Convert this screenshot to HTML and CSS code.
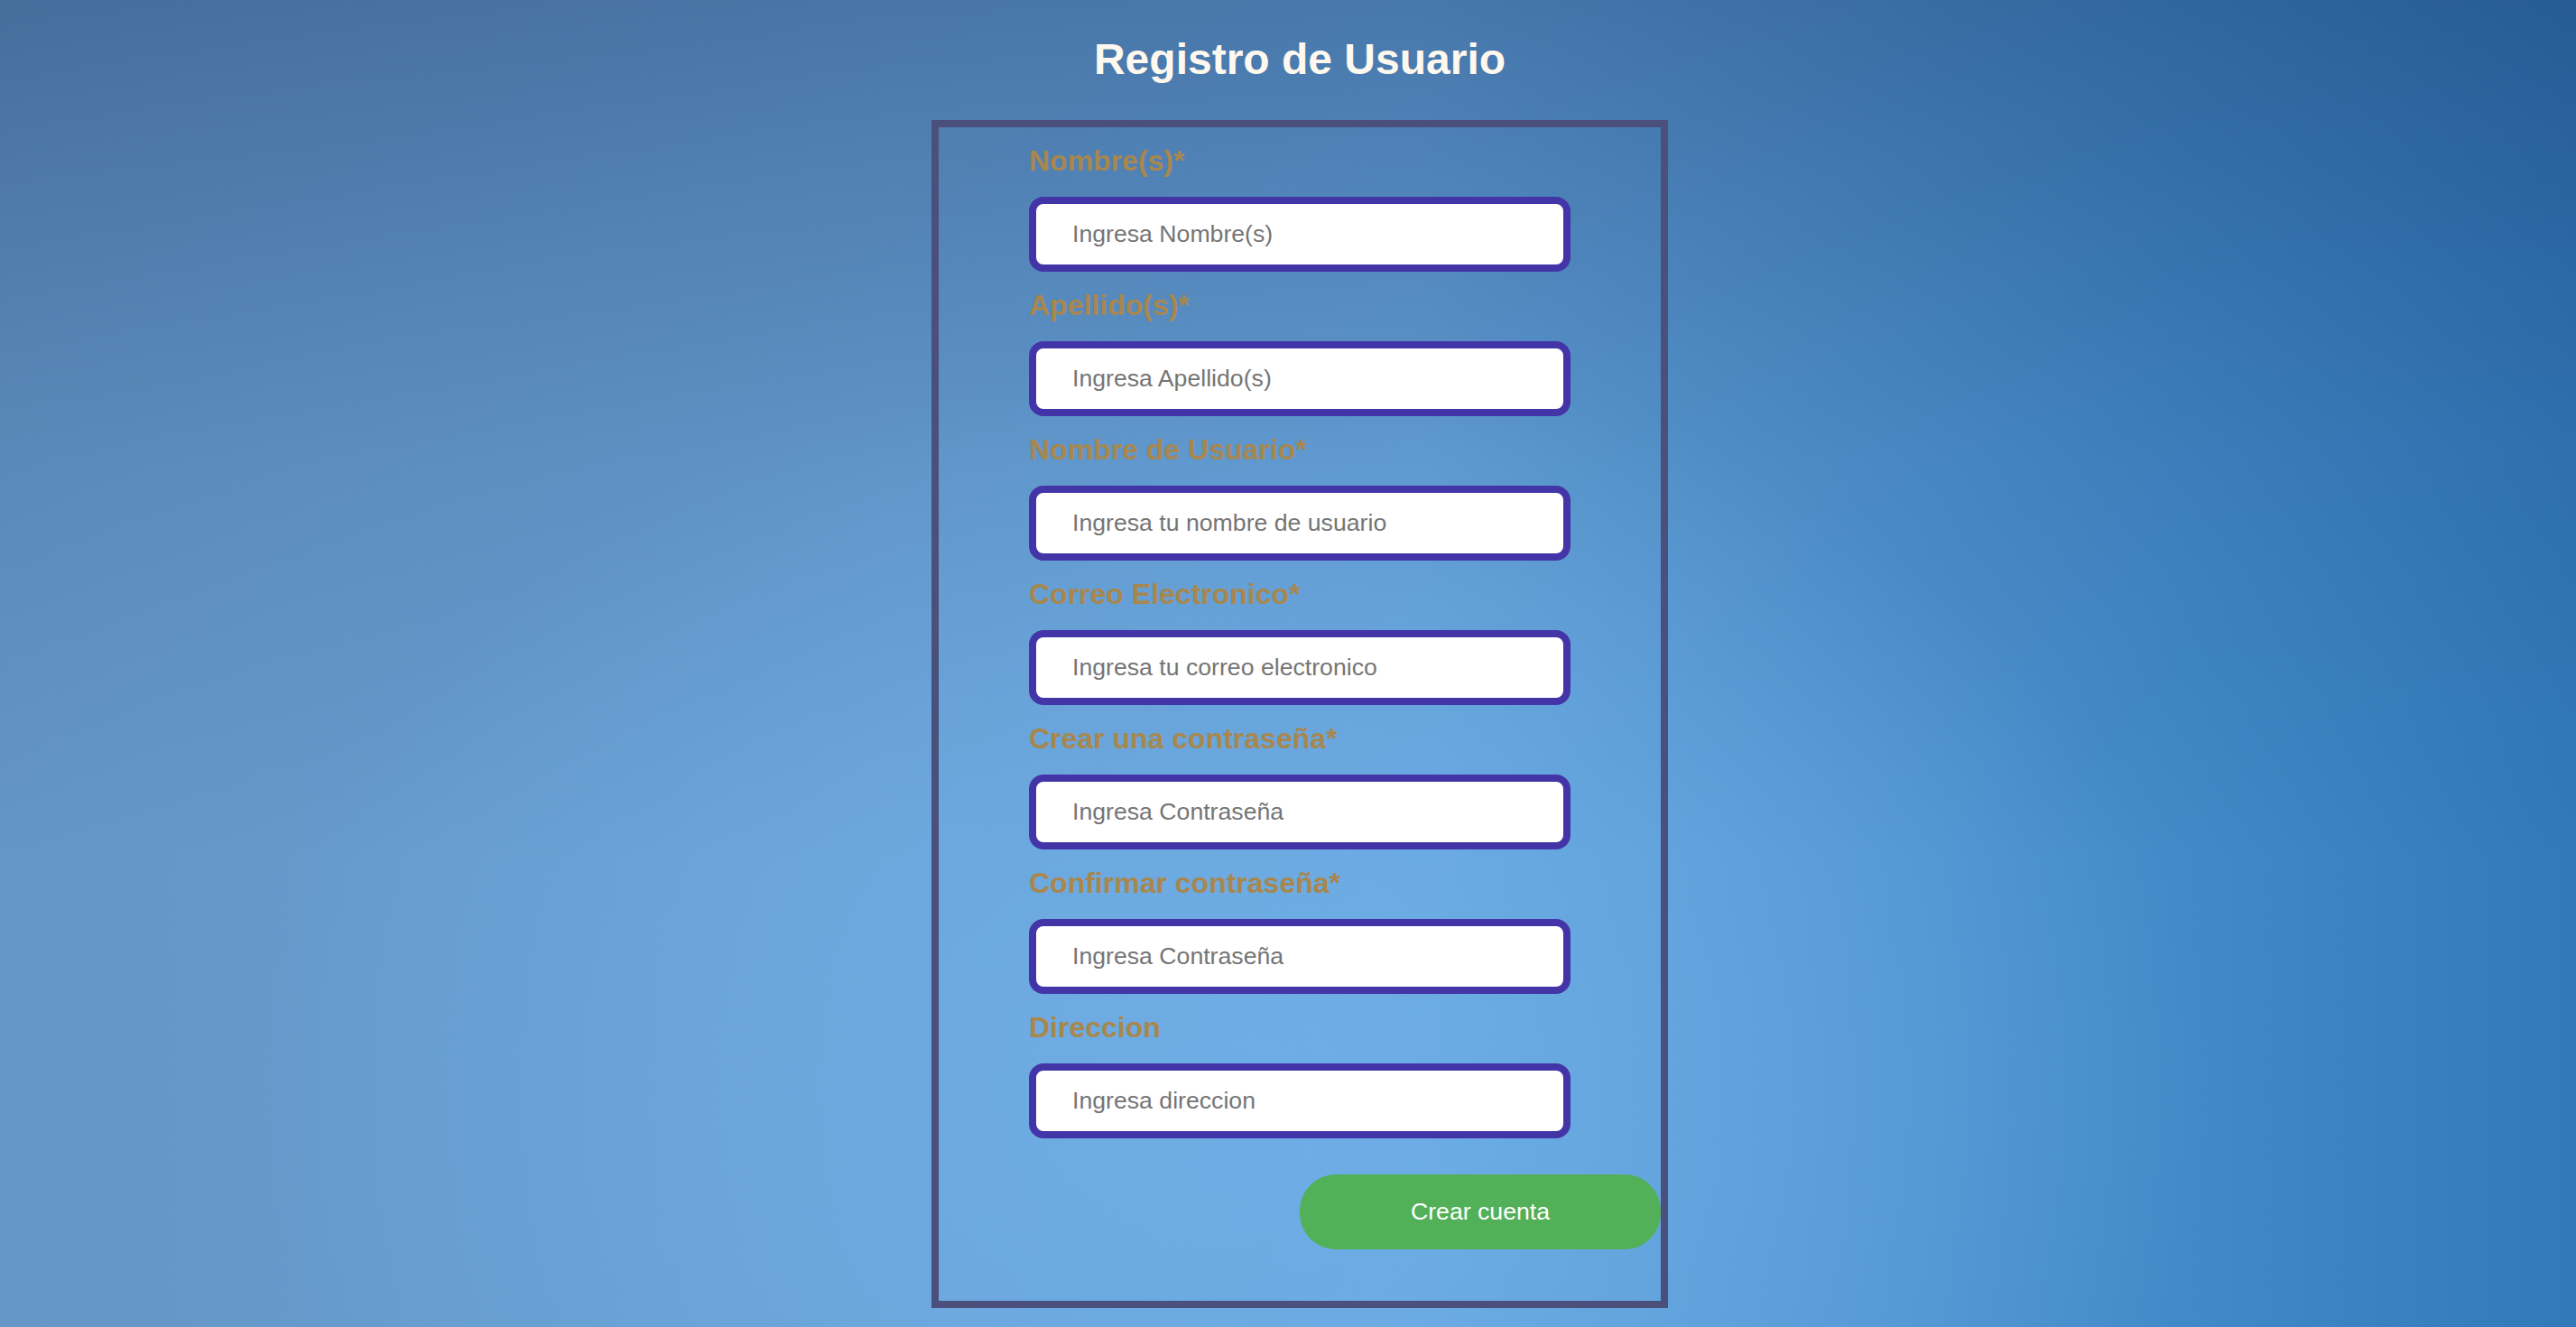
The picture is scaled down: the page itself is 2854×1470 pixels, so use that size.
FILE: index.html
```html
<!DOCTYPE html>
<html lang="es">
<head>
<meta charset="utf-8">
<title>Registro de Usuario</title>
<link rel="stylesheet" href="styles.css">
</head>
<body>
<main class="page">
  <h1 class="title">Registro de Usuario</h1>
  <form class="signup">
    <div class="field">
      <label class="field-label" for="nombre">Nombre(s)*</label>
      <input class="field-input" id="nombre" type="text" placeholder="Ingresa Nombre(s)">
    </div>
    <div class="field">
      <label class="field-label" for="apellido">Apellido(s)*</label>
      <input class="field-input" id="apellido" type="text" placeholder="Ingresa Apellido(s)">
    </div>
    <div class="field">
      <label class="field-label" for="usuario">Nombre de Usuario*</label>
      <input class="field-input" id="usuario" type="text" placeholder="Ingresa tu nombre de usuario">
    </div>
    <div class="field">
      <label class="field-label" for="correo">Correo Electronico*</label>
      <input class="field-input" id="correo" type="email" placeholder="Ingresa tu correo electronico">
    </div>
    <div class="field">
      <label class="field-label" for="pass1">Crear una contraseña*</label>
      <input class="field-input" id="pass1" type="password" placeholder="Ingresa Contraseña">
    </div>
    <div class="field">
      <label class="field-label" for="pass2">Confirmar contraseña*</label>
      <input class="field-input" id="pass2" type="password" placeholder="Ingresa Contraseña">
    </div>
    <div class="field">
      <label class="field-label" for="direccion">Direccion</label>
      <input class="field-input" id="direccion" type="text" placeholder="Ingresa direccion">
    </div>
    <button class="submit" type="button">Crear cuenta</button>
  </form>
</main>
</body>
</html>
```

FILE: styles.css
```css
html, body {
  margin: 0;
  padding: 0;
}

body {
  min-height: 1470px;
  font-family: "Liberation Sans", Arial, sans-serif;
  background:
    radial-gradient(ellipse 38% 55% at 48% 82%, rgba(112, 176, 232, 0.75), rgba(112, 176, 232, 0) 100%),
    linear-gradient(to bottom, rgba(20, 45, 90, 0.38) 0%, rgba(20, 45, 90, 0.12) 35%, rgba(20, 45, 90, 0) 65%),
    linear-gradient(to right, #6496c6 0%, #6aa2d6 35%, #67a6de 55%, #4189c8 85%, #3279ba 100%);
  overflow: hidden;
}

.page {
  display: flex;
  flex-direction: column;
  align-items: center;
  padding: 38px 0 0 26px;
}

.title {
  margin: 0;
  font-size: 48px;
  line-height: 55px;
  font-weight: 700;
  color: #fff8ee;
}

.signup {
  margin-top: 40px;
  width: 700px;
  border: 8px solid #4a4f7c;
  padding: 20px 0 57px 100px;
  box-sizing: content-box;
  display: flex;
  flex-direction: column;
  gap: 20px;
}

.signup .field {
  display: flex;
  flex-direction: column;
  gap: 23px;
}

.field-label {
  display: block;
  font-size: 32px;
  line-height: 34px;
  font-weight: 700;
  color: #a8874e;
}

.field-input {
  width: 600px;
  height: 83px;
  box-sizing: border-box;
  border: 8px solid #4335a7;
  border-radius: 16px;
  background: #ffffff;
  padding: 0 20px 0 40px;
  font-family: "Liberation Sans", Arial, sans-serif;
  font-size: 26.67px;
  color: #333333;
  outline: none;
}

.field-input::placeholder {
  color: #757575;
  opacity: 1;
}

.submit {
  margin-top: 20px;
  align-self: flex-end;
  width: 400px;
  height: 83px;
  border: none;
  border-radius: 40px;
  background: #52b058;
  color: #ffffff;
  font-family: "Liberation Sans", Arial, sans-serif;
  font-size: 26.67px;
  cursor: pointer;
}
```
